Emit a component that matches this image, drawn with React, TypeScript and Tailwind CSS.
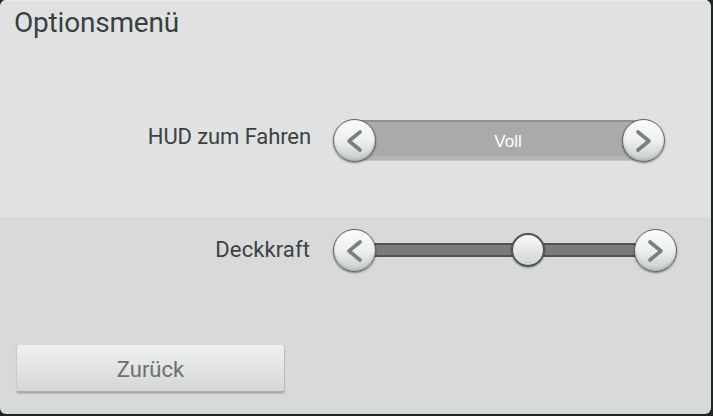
import React from "react";

const Arrow = ({ dir }: { dir: "left" | "right" }) => (
  <div className="relative z-10 w-[43px] h-[43px] shrink-0 rounded-full border border-[#5b6060] bg-gradient-to-b from-[#fbfbfb] via-[#eef0f0] to-[#c9cccc] shadow-[0_1px_2px_rgba(0,0,0,0.45),inset_0_-2px_3px_rgba(0,0,0,0.12)]">
    <svg width="41" height="41" viewBox="0 0 41 41" className="absolute left-0 top-0">
      {dir === "left" ? (
        <polyline points="26,12 15,21 26,30" fill="none" stroke="#7a8080" strokeWidth="3.6" strokeLinecap="round" strokeLinejoin="round" />
      ) : (
        <polyline points="15,12 26,21 15,30" fill="none" stroke="#7a8080" strokeWidth="3.6" strokeLinecap="round" strokeLinejoin="round" />
      )}
    </svg>
  </div>
);

export default function App() {
  const font = { fontFamily: "Roboto, 'Liberation Sans', sans-serif" };
  return (
    <div className="w-[713px] h-[416px] bg-[#1d2620]" style={font}>
      <div className="w-[711px] h-[414px] rounded-[6px] overflow-hidden flex flex-col">
        <div className="h-[217px] bg-[#e0e2e1] border-t border-[#ebedec] flex flex-col">
          <div className="h-[47px] pl-[14px] pt-[4px] text-[28px] leading-[36px] text-[#3a3f42] tracking-[-0.2px]">
            Optionsmenü
          </div>
          <div className="mt-[70px] h-[44px] flex items-center">
            <div className="w-[311px] text-right text-[22px] text-[#3c4144] tracking-[-0.1px] -mt-[8px]">HUD zum Fahren</div>
            <div className="ml-[22px] flex items-center">
              <Arrow dir="left" />
              <div className="-mx-[22px] w-[290px] h-[41px] bg-[#a9aaaa] border-t-2 border-t-[#8e9090] border-b border-b-[#c4c6c6] shadow-[inset_0_-4px_0_#b2b3b3] flex items-center justify-center pl-[18px]">
                <span className="text-white text-[17px] mt-[2px]" style={{ fontFamily: "'Liberation Sans', Arial, sans-serif" }}>Voll</span>
              </div>
              <Arrow dir="right" />
            </div>
          </div>
        </div>
        <div className="flex-1 bg-[#d8dad9] flex flex-col">
          <div className="mt-[11px] h-[44px] flex items-center">
            <div className="w-[310px] text-right text-[22px] text-[#3c4144] tracking-[0.1px] -mt-[2px]">Deckkraft</div>
            <div className="ml-[23px] flex items-center">
              <Arrow dir="left" />
              <div className="relative -mx-[6px] w-[270px] h-[14px] bg-[#7a7c7c] border-y-2 border-[#4f5353] flex items-center">
                <div className="absolute left-[141px] top-1/2 -translate-y-1/2 w-[34px] h-[34px] rounded-full border-2 border-[#4e5454] bg-gradient-to-b from-[#f8f9f9] to-[#d2d5d5] shadow-[0_1px_2px_rgba(0,0,0,0.3)]" />
              </div>
              <Arrow dir="right" />
            </div>
          </div>
          <div className="mt-[73px] ml-[16px] w-[269px] h-[48px] rounded-[3px] bg-gradient-to-b from-[#eef0ef] via-[#e2e5e4] to-[#d3d6d5] border-b-2 border-b-[#a9adac] border-r border-r-[#b9bdbc] border-l border-l-[#c6cac9] shadow-[0_1px_1px_rgba(0,0,0,0.15)] flex items-center justify-center">
            <span className="text-[22px] text-[#6b7072] mt-[2px]">Zurück</span>
          </div>
        </div>
      </div>
    </div>
  );
}
